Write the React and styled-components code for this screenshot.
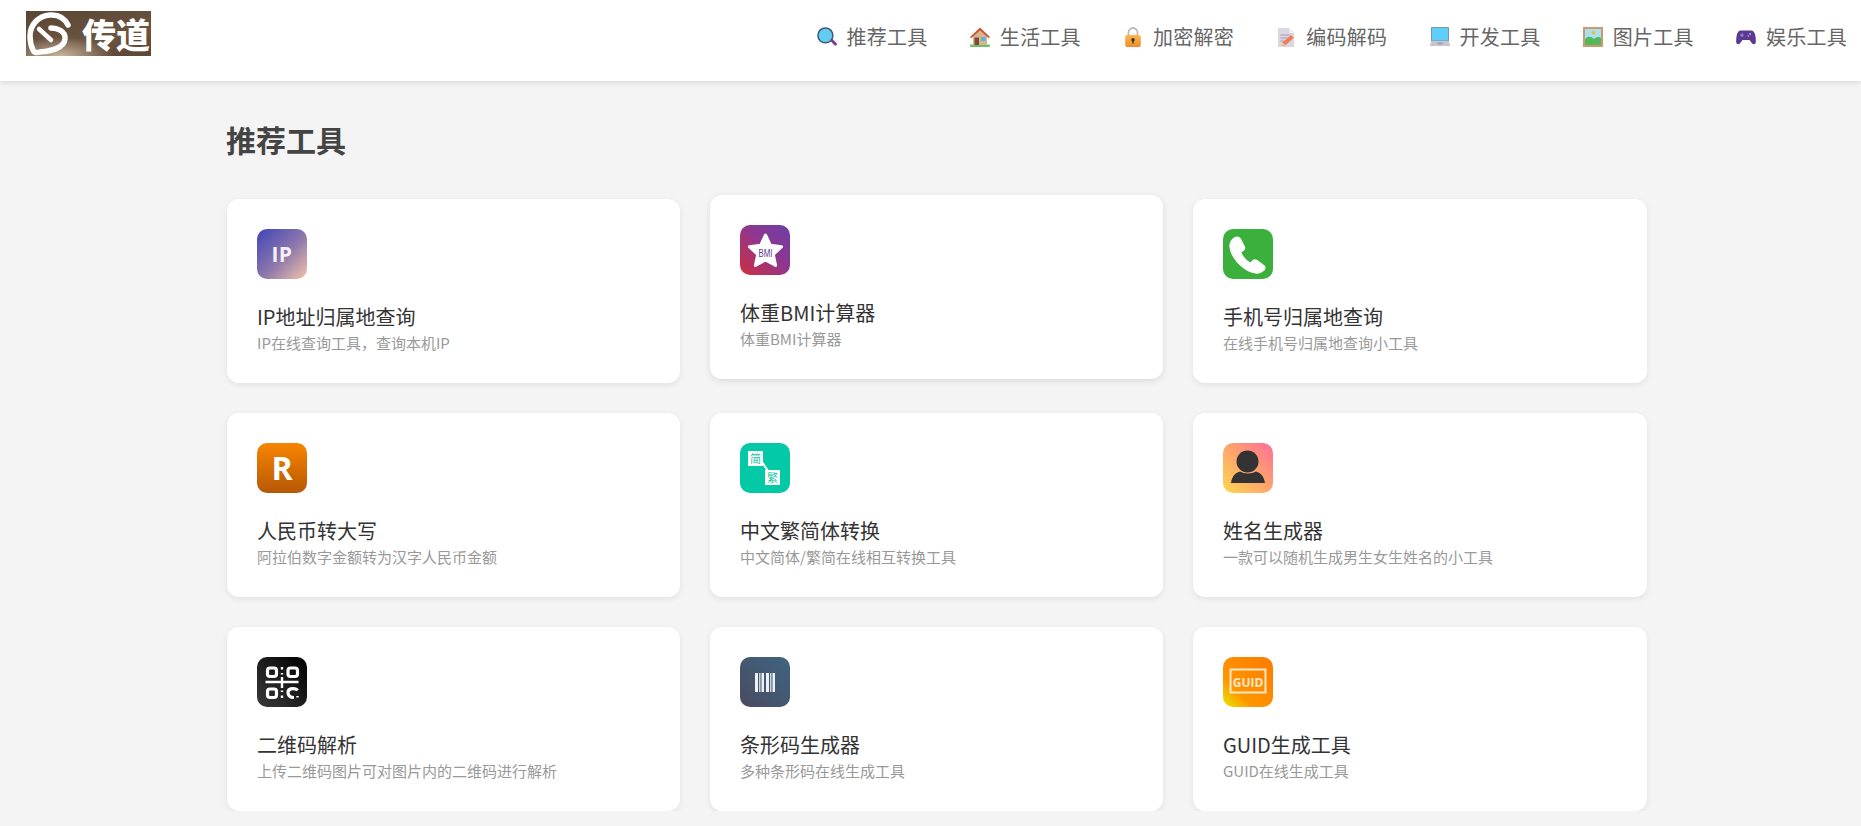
import styled, { createGlobalStyle } from 'styled-components';

const GlobalStyle = createGlobalStyle`
  html, body {
    margin: 0;
    padding: 0;
    background: #f4f4f4;
    font-family: "Noto Sans CJK SC", "Liberation Sans", sans-serif;
  }
`;

const IconSearch = () => (
  <svg width="20" height="20" viewBox="0 0 20 20">
    <path d="M13 13.500l2-2 4.500 4.700c.6.600.6 1.500 0 2.100-.6.600-1.500.6-2.100 0z" fill="#7a3f8f" />
    <circle cx="8.400" cy="8.400" r="8.200" fill="#3f5a78" />
    <circle cx="8.400" cy="8.400" r="6.700" fill="#62cdf0" />
  </svg>
);

const IconHouse = () => (
  <svg width="20" height="20" viewBox="0 0 20 20">
    <rect x="0" y="17.600" width="20" height="2.400" rx="1" fill="#6cc06c" />
    <path d="M3 9l7-6 7 6v9H3z" fill="#d9b48c" />
    <path d="M0 10L10 .6 20 10l-1.200 1.200L10 3.400 1.200 11.200z" fill="#c8553a" />
    <rect x="4.500" y="10.500" width="4.500" height="7.500" fill="#7a4a36" />
    <rect x="11" y="10" width="4.500" height="4" fill="#58b4e4" />
  </svg>
);

const IconLock = () => (
  <svg width="20" height="20" viewBox="0 0 20 20">
    <defs>
      <linearGradient id="lockBody" x1="0" y1="0" x2="0" y2="1">
        <stop offset="0" stopColor="#fdb94a" />
        <stop offset="1" stopColor="#ee8a2c" />
      </linearGradient>
    </defs>
    <path d="M5.500 9V5.500a4.500 4.500 0 0 1 9 0V9" fill="none" stroke="#bdb8c6" strokeWidth="1.800" />
    <rect x="2.200" y="8" width="15.600" height="12" rx="2" fill="url(#lockBody)" />
    <circle cx="10" cy="12.800" r="1.700" fill="#33302e" />
    <rect x="9.300" y="13" width="1.400" height="3.600" fill="#33302e" />
  </svg>
);

const IconMemo = () => (
  <svg width="20" height="20" viewBox="0 0 20 20">
    <path d="M2 1h11l5 5v14H2z" fill="#dcd5e2" />
    <path d="M13 1l5 5h-5z" fill="#f1edf4" />
    <path d="M4.500 8h9M4.500 11h7M4.500 14h4" stroke="#a79db2" strokeWidth="1" />
    <path d="M5.500 19l1-3.500 8.500-7.500 2.800 2.800-8.500 7.500z" fill="#ef7d50" />
    <path d="M5.500 19l1-3.500 2.800 2.500z" fill="#f4c9a0" />
  </svg>
);

const IconLaptop = () => (
  <svg width="20" height="20" viewBox="0 0 20 20">
    <rect x="1" y="0" width="18" height="14.500" rx=".8" fill="#7b93a8" />
    <rect x="2" y="1" width="16" height="12.500" fill="#5ed0f7" />
    <path d="M1 14.500h18l1 4.500H0z" fill="#c5c2d2" />
    <rect x="7.500" y="15.500" width="5" height="1.800" fill="#9d9aac" />
  </svg>
);

const IconPicture = () => (
  <svg width="20" height="20" viewBox="0 0 20 20">
    <rect width="20" height="20" fill="#c99b6e" />
    <rect x="2" y="2" width="16" height="16" fill="#a8e0f2" />
    <circle cx="10.500" cy="5.800" r="2" fill="#eebc3c" />
    <path d="M2 12c4-4 7-2 9 0 2-2 5-3 7-1v7H2z" fill="#52b85c" />
  </svg>
);

const IconGamepad = () => (
  <svg width="20" height="20" viewBox="0 0 20 20">
    <path d="M5 3.500h10c2.400 0 3.600 1.800 4.200 4.500.7 3 .9 7 .3 8.300-.6 1.300-2.300 1.400-3.400.3L13.500 13h-7l-2.600 3.600c-1.100 1.100-2.800 1-3.400-.3-.6-1.300-.4-5.300.3-8.300C1.400 5.300 2.600 3.500 5 3.500z" fill="#5b3a94" />
    <circle cx="14" cy="7" r="1" fill="#5ccbe8" />
    <circle cx="12.300" cy="9" r="1" fill="#e8679a" />
    <path d="M6 6.300v3.600M4.200 8.100h3.600" stroke="#9d86cc" strokeWidth="1.200" />
  </svg>
);

const navItems = [
  { icon: <IconSearch />, label: '推荐工具' },
  { icon: <IconHouse />, label: '生活工具' },
  { icon: <IconLock />, label: '加密解密' },
  { icon: <IconMemo />, label: '编码解码' },
  { icon: <IconLaptop />, label: '开发工具' },
  { icon: <IconPicture />, label: '图片工具' },
  { icon: <IconGamepad />, label: '娱乐工具' },
];

const BmiIcon = () => (
  <svg width="50" height="50" viewBox="0 0 50 50">
    <path d="M25.500 10l4.900 10.300 11.200 1.400-8.300 7.700 2.300 11.100-10.100-5.500-10.100 5.500 2.300-11.100-8.300-7.700 11.200-1.400z" fill="#fff" stroke="#fff" strokeWidth="3" strokeLinejoin="round" />
    <text x="25.500" y="31.500" textAnchor="middle" fontSize="11" fontFamily="Liberation Sans, sans-serif" fill="#5b3a8c" textLength="14" lengthAdjust="spacingAndGlyphs">BMI</text>
  </svg>
);

const PhoneIcon = () => (
  <svg width="50" height="50" viewBox="0 0 50 50">
    <path d="M11 8.500c2.500-1.800 5.600-1.300 6.800 1l3.900 7.500c1 2 .4 3.800-1.300 5l-2 1.300c1.800 4.600 4.700 7.800 9 10.200l1.800-1.900c1.500-1.500 3.300-1.600 5-.5l6.800 4.800c1.900 1.400 2 3.900.3 5.600-3 3-7.500 4-12.300 2.300C17.500 39.800 8 28.500 6.500 18.500c-.6-4.200 1.300-7.900 4.500-10z" fill="#fff" />
  </svg>
);

const FontR = styled.span`
  font-family: "Open Sans", "Liberation Sans", sans-serif;
  font-weight: 700;
  font-size: 32px;
  line-height: 50px;
  color: #fff;
`;

const FontIp = styled.span`
  font-family: "Open Sans", "Liberation Sans", sans-serif;
  font-weight: 700;
  font-size: 21px;
  line-height: 50px;
  letter-spacing: 0.5px;
  color: #f4f0f4;
`;

const JianFanIcon = () => (
  <svg width="50" height="50" viewBox="0 0 50 50">
    <path d="M22 19l6 9" stroke="#fff" strokeWidth="2" />
    <rect x="8" y="8" width="15" height="15" fill="#fff" />
    <rect x="25" y="27" width="15" height="15" fill="#fff" />
    <text x="15.500" y="20" textAnchor="middle" fontSize="11" fill="#1cc4a4" fontFamily="Noto Sans CJK SC, sans-serif">简</text>
    <text x="32.500" y="39" textAnchor="middle" fontSize="11" fill="#1cc4a4" fontFamily="Noto Sans CJK SC, sans-serif">繁</text>
  </svg>
);

const PersonIcon = () => (
  <svg width="50" height="50" viewBox="0 0 50 50">
    <circle cx="24.500" cy="18.500" r="11" fill="#333" />
    <path d="M8 40c1-6 3.500-10 9-11.500 4 2.500 12 2.500 16 0 5.500 1.500 8 5.500 9 11.500z" fill="#333" />
  </svg>
);

const QrIcon = () => (
  <svg width="50" height="50" viewBox="0 0 50 50" fill="none" stroke="#fff" strokeWidth="3.200">
    <rect x="10.500" y="11" width="9" height="8.500" rx="2.500" />
    <rect x="31" y="11" width="9.500" height="8.500" rx="2.500" />
    <rect x="10.500" y="32" width="9" height="8.500" rx="2.500" />
    <path d="M40.500 33.500C39 31 31 30.500 31 35.500c0 4.500 3 5 6 5" />
    <path d="M8.500 25h33M25 20v11" strokeWidth="2.400" />
    <path d="M25 10v2.500M25 16v1.500M25 33.500v1.500M25 38.500v2.500M40.500 39v1.500" strokeWidth="2.400" />
  </svg>
);

const BarcodeIcon = () => (
  <svg width="50" height="50" viewBox="0 0 50 50" fill="#eef1f4">
    <rect x="15" y="16" width="3" height="19" />
    <rect x="19" y="16" width="1.500" height="19" opacity="0.8" />
    <rect x="21.500" y="16" width="2.500" height="19" />
    <rect x="26" y="16" width="3" height="19" />
    <rect x="30" y="16" width="1.500" height="19" opacity="0.8" />
    <rect x="32.500" y="16" width="2.500" height="19" />
  </svg>
);

const GuidIcon = () => (
  <svg width="50" height="50" viewBox="0 0 50 50">
    <rect x="7.500" y="12.500" width="35" height="23" fill="none" stroke="#ffe9c8" strokeWidth="2" />
    <text x="25" y="29.500" textAnchor="middle" fontSize="12" fontWeight="700" fill="#ffe9c8" fontFamily="Open Sans, sans-serif">GUID</text>
  </svg>
);

const tools = [
  {
    title: 'IP地址归属地查询',
    desc: 'IP在线查询工具，查询本机IP',
    bg: 'linear-gradient(135deg, #3f45b8 0%, #8f78ac 55%, #f4c4a8 100%)',
    icon: <FontIp>IP</FontIp>,
  },
  {
    title: '体重BMI计算器',
    desc: '体重BMI计算器',
    bg: 'linear-gradient(45deg, #cf2f3c 0%, #8f3690 55%, #6a3fa4 100%)',
    icon: <BmiIcon />,
    raised: true,
  },
  {
    title: '手机号归属地查询',
    desc: '在线手机号归属地查询小工具',
    bg: '#3cb03c',
    icon: <PhoneIcon />,
  },
  {
    title: '人民币转大写',
    desc: '阿拉伯数字金额转为汉字人民币金额',
    bg: 'linear-gradient(180deg, #f88500 0%, #b65805 100%)',
    icon: <FontR>R</FontR>,
  },
  {
    title: '中文繁简体转换',
    desc: '中文简体/繁简在线相互转换工具',
    bg: '#04c9a6',
    icon: <JianFanIcon />,
  },
  {
    title: '姓名生成器',
    desc: '一款可以随机生成男生女生姓名的小工具',
    bg: 'linear-gradient(45deg, #ffd84e 0%, #ffa070 55%, #ff6c98 100%)',
    icon: <PersonIcon />,
  },
  {
    title: '二维码解析',
    desc: '上传二维码图片可对图片内的二维码进行解析',
    bg: 'linear-gradient(45deg, #3a3a3a 0%, #000 100%)',
    icon: <QrIcon />,
  },
  {
    title: '条形码生成器',
    desc: '多种条形码在线生成工具',
    bg: 'linear-gradient(45deg, #4a4a60 0%, #3f6580 100%)',
    icon: <BarcodeIcon />,
  },
  {
    title: 'GUID生成工具',
    desc: 'GUID在线生成工具',
    bg: 'linear-gradient(45deg, #e4ea00 0%, #ff9500 30%, #ff7a00 100%)',
    icon: <GuidIcon />,
  },
];

const App = () => {
  return (
    <>
      <GlobalStyle />
      <Header>
        <Logo>
          <svg width="46" height="45" viewBox="0 0 46 45">
            <path d="M42 14C38 6 31 3.500 24 4 12 5 4 14 4 25c0 5 1 10 3 14 1 3 4 3 7 2 10-1 24-3 25-13 1-8-8-11-14-11" fill="none" stroke="#fff" strokeWidth="5.500" strokeLinecap="round" />
            <path d="M13 18l12 11" stroke="#fff" strokeWidth="4.500" strokeLinecap="round" />
          </svg>
          <LogoText>传道</LogoText>
        </Logo>
        <Nav>
          {navItems.map((item) => (
            <NavItem key={item.label}>
              {item.icon}
              <span>{item.label}</span>
            </NavItem>
          ))}
        </Nav>
      </Header>
      <Main>
        <Heading>推荐工具</Heading>
        <Grid>
          {tools.map((tool) => (
            <Card key={tool.title} $raised={tool.raised}>
              <IconTile $bg={tool.bg}>{tool.icon}</IconTile>
              <CardTitle>{tool.title}</CardTitle>
              <CardDesc>{tool.desc}</CardDesc>
            </Card>
          ))}
        </Grid>
      </Main>
    </>
  );
};

export default App;

const Header = styled.header`
  display: flex;
  justify-content: space-between;
  height: 81px;
  padding: 11px 14px 0 26px;
  box-sizing: border-box;
  background: #fff;
  box-shadow: 0 2px 5px rgba(0, 0, 0, 0.1);
`;

const Logo = styled.div`
  display: flex;
  align-items: center;
  gap: 10px;
  width: 125px;
  height: 45px;
  box-sizing: border-box;
  background: radial-gradient(ellipse 42% 42% at 28% 100%, #c9b49c, rgba(201, 180, 156, 0)),
    linear-gradient(170deg, #5a4433 0%, #6b5541 60%, #5c4634 100%);
`;

const LogoText = styled.span`
  color: #fff;
  font-size: 34px;
  font-weight: 900;
  line-height: 45px;
  white-space: nowrap;
`;

const Nav = styled.nav`
  display: flex;
  gap: 42.25px;
  height: 52px;
  align-items: center;
`;

const NavItem = styled.a`
  display: flex;
  align-items: center;
  gap: 10px;
  font-size: 20px;
  line-height: 30px;
  letter-spacing: 0.25px;
  color: #666;
  cursor: pointer;
`;

const Main = styled.main`
  width: 1420px;
  margin-left: 227px;
  padding-top: 38px;
`;

const Heading = styled.h2`
  margin: 0 0 40px -1px;
  font-size: 30px;
  line-height: 40px;
  font-weight: 700;
  color: #444;
`;

const Grid = styled.div`
  display: grid;
  grid-template-columns: 453px 453px 454px;
  gap: 30px;
`;

const Card = styled.div`
  height: 184px;
  padding: 30px;
  box-sizing: border-box;
  background: #fff;
  border-radius: 12px;
  box-shadow: ${(props) =>
    props.$raised ? '0 2px 7px rgba(0, 0, 0, 0.1)' : '0 2px 6px rgba(0, 0, 0, 0.08)'};
  transform: ${(props) => (props.$raised ? 'translateY(-4px)' : 'none')};
  cursor: pointer;
`;

const IconTile = styled.div`
  display: flex;
  align-items: center;
  justify-content: center;
  width: 50px;
  height: 50px;
  margin-bottom: 23px;
  border-radius: 10px;
  overflow: hidden;
  background: ${(props) => props.$bg};
`;

const CardTitle = styled.div`
  font-size: 20px;
  line-height: 30px;
  color: #333;
`;

const CardDesc = styled.div`
  font-size: 15px;
  line-height: 22px;
  color: #999;
`;
